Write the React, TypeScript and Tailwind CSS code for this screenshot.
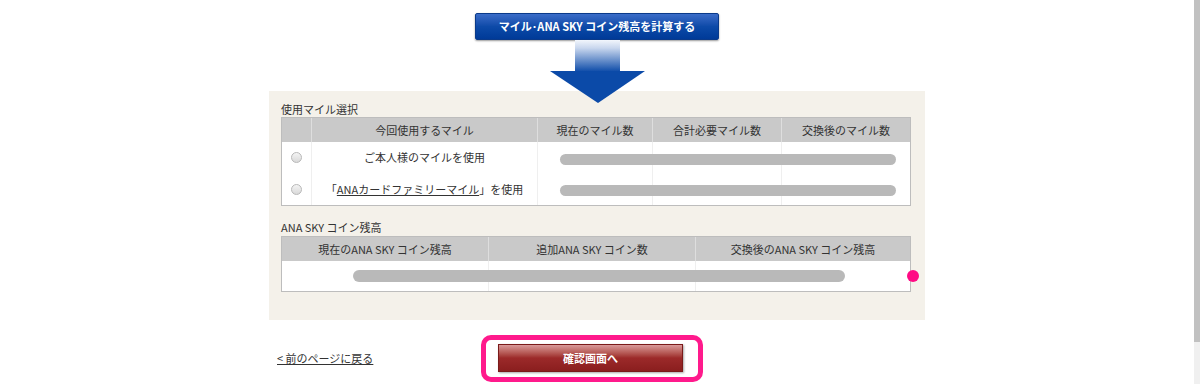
import React from "react";

const jp = { fontFamily: '"Noto Sans CJK JP", "Liberation Sans", sans-serif' };

function Radio() {
  return (
    <span className="block w-[11px] h-[11px] rounded-full border border-[#b8b8b8] bg-gradient-to-b from-[#f4f4f4] to-[#d9d9d9]" />
  );
}

function Arrow() {
  return (
    <svg width="95" height="63" viewBox="0 0 95 63" className="relative z-10">
      <defs>
        <linearGradient id="shaft" x1="0" y1="0" x2="0" y2="1">
          <stop offset="0" stopColor="#f2f6fc" />
          <stop offset="0.25" stopColor="#c9d7ee" />
          <stop offset="1" stopColor="#0b4aa8" />
        </linearGradient>
      </defs>
      <rect x="25" y="0" width="45" height="32" fill="url(#shaft)" />
      <polygon points="0,31 95,31 48,63" fill="#0b4aa8" />
    </svg>
  );
}

export default function App() {
  return (
    <div className="flex w-full h-[384px] overflow-hidden bg-white text-[#333]" style={jp}>
      <div className="flex-1 flex flex-col items-center">
        {/* Calculate button */}
        <button className="mt-[13px] w-[244px] h-[27px] rounded-[2px] border border-[#0a3a8a] bg-gradient-to-b from-[#3a6cc8] via-[#0d4aa8] to-[#003a98] text-white text-[11px] font-bold shadow-[0_1px_2px_rgba(0,0,0,0.4)]">
          マイル･ANA SKY コイン残高を計算する
        </button>

        <Arrow />

        {/* Panel */}
        <div className="-mt-[12px] w-[656px] bg-[#f4f1ea] pt-[10px] pb-[28px] pl-[12px] pr-[14px] text-[11px]">
          <div className="h-4 leading-4">使用マイル選択</div>
          <div className="relative border border-[#bdbdbd] bg-white">
            <div className="grid grid-cols-[30px_226px_115px_129px_128px] h-[24px] bg-[#c9c9c9] leading-[24px] text-center">
              <div className="border-r border-[#dedede]" />
              <div className="border-r border-[#dedede]">今回使用するマイル</div>
              <div className="border-r border-[#dedede]">現在のマイル数</div>
              <div className="border-r border-[#dedede]">合計必要マイル数</div>
              <div>交換後のマイル数</div>
            </div>
            <div className="grid grid-cols-[30px_226px_115px_129px_128px] h-[31px] text-center items-stretch">
              <div className="flex items-center justify-center border-r border-[#efefef]"><Radio /></div>
              <div className="flex items-center justify-center border-r border-[#efefef]">ご本人様のマイルを使用</div>
              <div className="border-r border-[#efefef]" />
              <div className="border-r border-[#efefef]" />
              <div />
            </div>
            <div className="grid grid-cols-[30px_226px_115px_129px_128px] h-[32px] text-center items-stretch">
              <div className="flex items-center justify-center border-r border-[#efefef]"><Radio /></div>
              <div className="flex items-center justify-center border-r border-[#efefef]">
                「<span className="underline">ANAカードファミリーマイル</span>」を使用
              </div>
              <div className="border-r border-[#efefef]" />
              <div className="border-r border-[#efefef]" />
              <div />
            </div>
            <div className="absolute left-[278px] top-[36px] w-[336px] h-[11px] rounded-full bg-[#b9b9b9]" />
            <div className="absolute left-[278px] top-[67px] w-[336px] h-[11px] rounded-full bg-[#b9b9b9]" />
          </div>

          <div className="mt-[13px] h-[17px] leading-4">ANA SKY コイン残高</div>
          <div className="relative border border-[#bdbdbd] bg-white">
            <div className="grid grid-cols-[207px_207px_214px] h-[24px] bg-[#c9c9c9] leading-[24px] text-center">
              <div className="border-r border-[#dedede]">現在のANA SKY コイン残高</div>
              <div className="border-r border-[#dedede]">追加ANA SKY コイン数</div>
              <div>交換後のANA SKY コイン残高</div>
            </div>
            <div className="grid grid-cols-[207px_207px_214px] h-[30px]">
              <div className="border-r border-[#efefef]" />
              <div className="border-r border-[#efefef]" />
              <div />
            </div>
            <div className="absolute left-[71px] top-[33px] w-[492px] h-[12px] rounded-full bg-[#b9b9b9]" />
            <div className="absolute left-[625px] top-[33px] w-[12px] h-[12px] rounded-full bg-[#ff0a84]" />
          </div>
        </div>

        {/* Bottom row */}
        <div className="mt-[15px] w-[656px] flex items-center">
          <a className="w-[212px] pl-[8px] text-[11px] underline text-[#333]">&lt; 前のページに戻る</a>
          <div className="border-[5px] border-[#ff1a8c] rounded-[10px] pl-[12px] pr-[15px] pt-[4px] pb-[5px] bg-white">
            <button className="block w-[185px] h-[28px] border border-[#7a1a1a] bg-gradient-to-b from-[#d99a9a] via-[#9c2a2a] to-[#8a1e1e] text-white text-[11px] font-bold shadow-[1px_1px_2px_rgba(0,0,0,0.35)]">
              確認画面へ
            </button>
          </div>
        </div>
      </div>

      {/* Scrollbar */}
      <div className="w-[6px] h-full flex flex-col">
        <div className="h-[342px] bg-[#c1c1c1]" />
        <div className="flex-1 bg-[#f0f0f0]" />
      </div>
    </div>
  );
}
